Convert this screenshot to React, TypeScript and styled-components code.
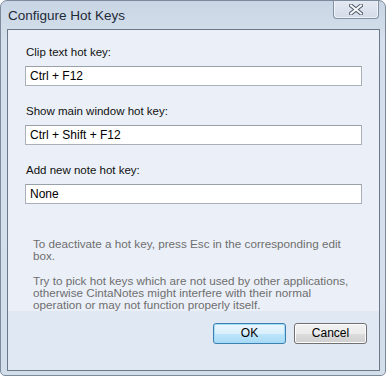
import React from "react"
import styled, {createGlobalStyle} from "styled-components"

const GlobalStyle = createGlobalStyle`
  html, body {
    margin: 0;
    padding: 0;
    background: #ffffff;
  }
  body {
    font-family: "Liberation Sans", Arial, sans-serif;
  }
`

const Window = styled.div`
  box-sizing: border-box;
  width: 386px;
  height: 376px;
  display: flex;
  flex-direction: column;
  border: 1px solid #7c8a9c;
  border-radius: 7px 7px 5px 5px;
  background: linear-gradient(#c8d5e4, #d6e0ec 40px, #d3deeb);
  padding: 0 5px 5px 6px;
  overflow: hidden;
`

const TitleBar = styled.div`
  height: 28px;
  display: flex;
  align-items: flex-start;
  justify-content: space-between;
  flex-shrink: 0;
`

const Title = styled.div`
  font-size: 13.5px;
  color: #1e2a38;
  padding: 7px 0 0 1px;
`

const CloseButton = styled.div`
  box-sizing: border-box;
  width: 46px;
  height: 19px;
  margin-top: -1px;
  margin-right: 1px;
  border: 1px solid #8391a4;
  border-top: none;
  border-radius: 0 0 4px 4px;
  background: linear-gradient(#e4eaf2, #d3dce8);
  display: flex;
  align-items: center;
  justify-content: center;
  box-shadow: inset 0 0 0 1px rgba(255, 255, 255, 0.6);
`

const Client = styled.div`
  flex: 1;
  display: flex;
  flex-direction: column;
  border: 1px solid #6c7888;
  background: #ebf0f8;
`

const Form = styled.div`
  flex: 1;
  display: flex;
  flex-direction: column;
  padding: 15px 17px 0 17px;
`

const Field = styled.div`
  display: flex;
  flex-direction: column;
  gap: 7px;
  margin-bottom: 18px;
`

const Label = styled.div`
  font-size: 11.5px;
  line-height: 14px;
  color: #111;
  padding-left: 1px;
`

const Input = styled.div`
  box-sizing: border-box;
  height: 20px;
  border: 1px solid #abb0b8;
  border-top-color: #9aa0a8;
  background: #ffffff;
  font-size: 12px;
  line-height: 18px;
  padding-left: 4px;
  color: #000;
`

const Help = styled.div`
  padding: 16px 0 0 8px;
  width: 320px;
  display: flex;
  flex-direction: column;
  gap: 13px;
`

const HelpText = styled.p`
  margin: 0;
  font-size: 11.7px;
  line-height: 12px;
  color: #6e6e6e;
`

const ButtonBar = styled.div`
  height: 47px;
  display: flex;
  justify-content: flex-end;
  align-items: flex-start;
  gap: 8px;
  padding: 12px 12px 0 0;
  background: #e0e8f3;
  flex-shrink: 0;
`

const Button = styled.div<{$primary?: boolean}>`
  box-sizing: border-box;
  width: 73px;
  height: 21px;
  border-radius: 3px;
  border: 1px solid ${p => (p.$primary ? "#3c7fb1" : "#707070")};
  background: ${p =>
    p.$primary
      ? "linear-gradient(#eaf6fd 0%, #d9f0fc 50%, #bee6fd 51%, #a7d9f5 100%)"
      : "linear-gradient(#f2f2f2 0%, #ebebeb 50%, #dddddd 51%, #cfcfcf 100%)"};
  box-shadow: inset 0 0 0 1px ${p => (p.$primary ? "#a6dcf5" : "#fcfcfc")};
  font-size: 12px;
  line-height: 19px;
  text-align: center;
  color: #000;
`

const fields = [
  {label: "Clip text hot key:", value: "Ctrl + F12"},
  {label: "Show main window hot key:", value: "Ctrl + Shift + F12"},
  {label: "Add new note hot key:", value: "None"},
]

export default function App() {
  return (
    <>
      <GlobalStyle/>
      <Window>
        <TitleBar>
          <Title>Configure Hot Keys</Title>
          <CloseButton>
            <svg width="14" height="11" viewBox="0 0 14 11">
              <path d="M2 1.5 L12 9.5 M12 1.5 L2 9.5" stroke="#4f5965" strokeWidth="4" strokeLinecap="square"/>
              <path d="M2 1.5 L12 9.5 M12 1.5 L2 9.5" stroke="#f4f6f9" strokeWidth="2" strokeLinecap="square"/>
            </svg>
          </CloseButton>
        </TitleBar>
        <Client>
          <Form>
            {fields.map(f => (
              <Field key={f.label}>
                <Label>{f.label}</Label>
                <Input>{f.value}</Input>
              </Field>
            ))}
            <Help>
              <HelpText>
                To deactivate a hot key, press Esc in the corresponding edit box.
              </HelpText>
              <HelpText>
                Try to pick hot keys which are not used by other applications, otherwise CintaNotes might interfere with their normal operation or may not function properly itself.
              </HelpText>
            </Help>
          </Form>
          <ButtonBar>
            <Button $primary>OK</Button>
            <Button>Cancel</Button>
          </ButtonBar>
        </Client>
      </Window>
    </>
  )
}
